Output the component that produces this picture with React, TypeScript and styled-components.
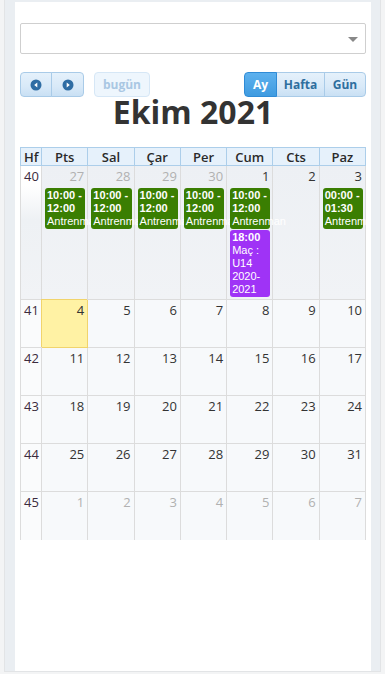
import styled, { createGlobalStyle } from 'styled-components';

const GlobalStyle = createGlobalStyle`
  html, body {
    margin: 0;
    padding: 0;
    background: #f3f4f5;
  }
  body {
    font-family: "Open Sans", "Liberation Sans", sans-serif;
    color: #333;
  }
`;

const Frame = styled.div`
  margin: 0 4px;
  height: 669px;
  padding: 2px 10px 0;
  background: #eaeef2;
  border: 1px solid #e2e4e6;
  border-top: none;
  display: flex;
`;

const Panel = styled.div`
  flex: 1;
  background: #fff;
  padding: 21px 5px 0;
`;

const SelectBox = styled.div`
  position: relative;
  height: 31px;
  box-sizing: border-box;
  border: 1px solid #cfcfcf;
  border-radius: 2px;
  background: #fff;

  &::after {
    content: '';
    position: absolute;
    right: 7px;
    top: 13px;
    border-left: 5px solid transparent;
    border-right: 5px solid transparent;
    border-top: 5px solid #888;
  }
`;

const Toolbar = styled.div`
  margin-top: 18px;
  height: 25px;
  display: flex;
  align-items: stretch;
  justify-content: space-between;
`;

const ToolGroup = styled.div`
  display: flex;
  gap: 10px;
`;

const ButtonGroup = styled.div`
  display: flex;

  & > button + button {
    margin-left: -1px;
  }
  & > button:first-child {
    border-radius: 4px 0 0 4px;
  }
  & > button:last-child {
    border-radius: 0 4px 4px 0;
  }
`;

const Button = styled.button<{ $active?: boolean; $width: number }>`
  height: 25px;
  width: ${(p) => p.$width}px;
  box-sizing: border-box;
  padding: 0;
  display: flex;
  align-items: center;
  justify-content: center;
  font-family: "Open Sans", "Liberation Sans", sans-serif;
  font-size: 12px;
  font-weight: 700;
  border: 1px solid ${(p) => (p.$active ? '#2f8bd6' : '#a9cbe8')};
  background: ${(p) =>
    p.$active
      ? 'linear-gradient(#5db1ee, #3f9be0)'
      : 'linear-gradient(#e5f1fb 0%, #d8e9f8 60%, #c9e0f4 100%)'};
  color: ${(p) => (p.$active ? '#fff' : '#2e6e9e')};
  position: relative;
  z-index: ${(p) => (p.$active ? 1 : 0)};
  cursor: pointer;
`;

const TodayButton = styled.button`
  height: 25px;
  width: 56px;
  box-sizing: border-box;
  border: 1px solid #d6e7f6;
  border-radius: 4px;
  background: #eef6fd;
  color: #a9c7e3;
  font-family: "Open Sans", "Liberation Sans", sans-serif;
  font-size: 12px;
  font-weight: 700;
  padding: 0;
`;

const Title = styled.h2`
  margin: 0 0 20px;
  text-align: center;
  font-size: 32px;
  line-height: 30px;
  font-weight: 700;
  color: #333;
`;

const Scroller = styled.div`
  height: 393px;
  overflow: hidden;
`;

const Table = styled.table`
  width: 346px;
  table-layout: fixed;
  border-collapse: separate;
  border-spacing: 0;
`;

const HeadCell = styled.th<{ $week?: boolean }>`
  height: 19px;
  box-sizing: border-box;
  padding: 0;
  ${(p) => (p.$week ? 'width: 22px; border-left: 1px solid #acceea; text-align: left; padding-left: 3px;' : 'text-align: center;')}
  border-top: 1px solid #acceea;
  border-right: 1px solid #acceea;
  border-bottom: 1px solid #acceea;
  background: #e6f1fb;
  font-size: 13px;
  font-weight: 600;
  line-height: 16px;
  color: #2a2a2a;
`;

const Row = styled.tr<{ $height: number }>`
  height: ${(p) => p.$height}px;

  &:last-child td {
    border-bottom: none;
  }
`;

const WeekCell = styled.td<{ $first?: boolean }>`
  vertical-align: top;
  padding: 1px 0 0 3px;
  border-left: 1px solid #dcdcdc;
  border-right: 1px solid #dcdcdc;
  border-bottom: 1px solid #dcdcdc;
  background: ${(p) =>
    p.$first ? 'linear-gradient(#ffffff 15%, #eef1f4 40%, #f1f3f6 100%)' : '#fafbfc'};
  font-size: 13px;
  line-height: 18px;
  color: #3b2b3d;
`;

const DayCell = styled.td<{ $first?: boolean; $today?: boolean }>`
  vertical-align: top;
  padding: 0;
  border-right: 1px solid ${(p) => (p.$today ? '#f1d46c' : '#dcdcdc')};
  border-bottom: 1px solid ${(p) => (p.$today ? '#f1d46c' : '#dcdcdc')};
  background: ${(p) =>
    p.$today ? '#fff2a4' : p.$first ? 'linear-gradient(#edf0f4, #f1f3f6)' : '#f7f9fb'};
  ${(p) => (p.$today ? 'box-shadow: -1px -1px 0 #f1d46c;' : '')}
`;

const DayNumber = styled.div<{ $other?: boolean }>`
  text-align: right;
  padding: 1px 3px 0 0;
  font-size: 13px;
  line-height: 18px;
  color: ${(p) => (p.$other ? '#b1b1b1' : '#333')};
`;

const EventList = styled.div`
  margin-top: 3px;
  display: flex;
  flex-direction: column;
  gap: 1px;
`;

const EventBox = styled.div<{ $color: string }>`
  margin: 0 2px 0 3px;
  padding: 1px 2px;
  border-radius: 3px;
  background: ${(p) => p.$color};
  color: #fff;
  font-family: "Liberation Sans", Arial, sans-serif;
  font-size: 11px;
  line-height: 13px;
`;

const EventTime = styled.div`
  font-weight: 700;
`;

const EventTitle = styled.div``;

type Ev = { time: string; title: string; color: string };
type Day = { n: number; other?: boolean; today?: boolean; events?: Ev[] };

const GREEN = '#3a7e02';
const PURPLE = '#9f33f6';
const training: Ev = { time: '10:00 - 12:00', title: 'Antrenman', color: GREEN };

const weeks: { no: number; height: number; days: Day[] }[] = [
  {
    no: 40,
    height: 134,
    days: [
      { n: 27, other: true, events: [training] },
      { n: 28, other: true, events: [training] },
      { n: 29, other: true, events: [training] },
      { n: 30, other: true, events: [training] },
      { n: 1, events: [training, { time: '18:00', title: 'Maç : U14 2020-2021', color: PURPLE }] },
      { n: 2 },
      { n: 3, events: [{ time: '00:00 - 01:30', title: 'Antrenman', color: GREEN }] },
    ],
  },
  { no: 41, height: 48, days: [4, 5, 6, 7, 8, 9, 10].map((n) => ({ n, today: n === 4 })) },
  { no: 42, height: 48, days: [11, 12, 13, 14, 15, 16, 17].map((n) => ({ n })) },
  { no: 43, height: 48, days: [18, 19, 20, 21, 22, 23, 24].map((n) => ({ n })) },
  { no: 44, height: 48, days: [25, 26, 27, 28, 29, 30, 31].map((n) => ({ n })) },
  { no: 45, height: 48, days: [1, 2, 3, 4, 5, 6, 7].map((n) => ({ n, other: true })) },
];

const dayNames = ['Pts', 'Sal', 'Çar', 'Per', 'Cum', 'Cts', 'Paz'];

function CircleArrow({ dir }: { dir: 'left' | 'right' }) {
  return (
    <svg width="12" height="12" viewBox="0 0 12 12">
      <circle cx="6" cy="6" r="5.5" fill="#2f6da4" />
      {dir === 'left' ? (
        <path d="M7.3 3.4 L4.2 6 L7.3 8.6 Z" fill="#fff" />
      ) : (
        <path d="M4.7 3.4 L7.8 6 L4.7 8.6 Z" fill="#fff" />
      )}
    </svg>
  );
}

export default function App() {
  return (
    <>
      <GlobalStyle />
      <Frame>
        <Panel>
          <SelectBox />
          <Toolbar>
            <ToolGroup>
              <ButtonGroup>
                <Button $width={32}>
                  <CircleArrow dir="left" />
                </Button>
                <Button $width={33}>
                  <CircleArrow dir="right" />
                </Button>
              </ButtonGroup>
              <TodayButton disabled>bugün</TodayButton>
            </ToolGroup>
            <ButtonGroup>
              <Button $active $width={33}>
                Ay
              </Button>
              <Button $width={49}>Hafta</Button>
              <Button $width={42}>Gün</Button>
            </ButtonGroup>
          </Toolbar>
          <Title>Ekim 2021</Title>
          <Scroller>
            <Table>
              <thead>
                <tr>
                  <HeadCell $week>Hf</HeadCell>
                  {dayNames.map((d) => (
                    <HeadCell key={d}>{d}</HeadCell>
                  ))}
                </tr>
              </thead>
              <tbody>
                {weeks.map((w, wi) => (
                  <Row key={w.no} $height={w.height}>
                    <WeekCell $first={wi === 0}>{w.no}</WeekCell>
                    {w.days.map((d, di) => (
                      <DayCell key={di} $first={wi === 0} $today={d.today}>
                        <DayNumber $other={d.other}>{d.n}</DayNumber>
                        {d.events && (
                          <EventList>
                            {d.events.map((e, ei) => (
                              <EventBox key={ei} $color={e.color}>
                                <EventTime>{e.time}</EventTime>
                                <EventTitle>{e.title}</EventTitle>
                              </EventBox>
                            ))}
                          </EventList>
                        )}
                      </DayCell>
                    ))}
                  </Row>
                ))}
              </tbody>
            </Table>
          </Scroller>
        </Panel>
      </Frame>
    </>
  );
}
